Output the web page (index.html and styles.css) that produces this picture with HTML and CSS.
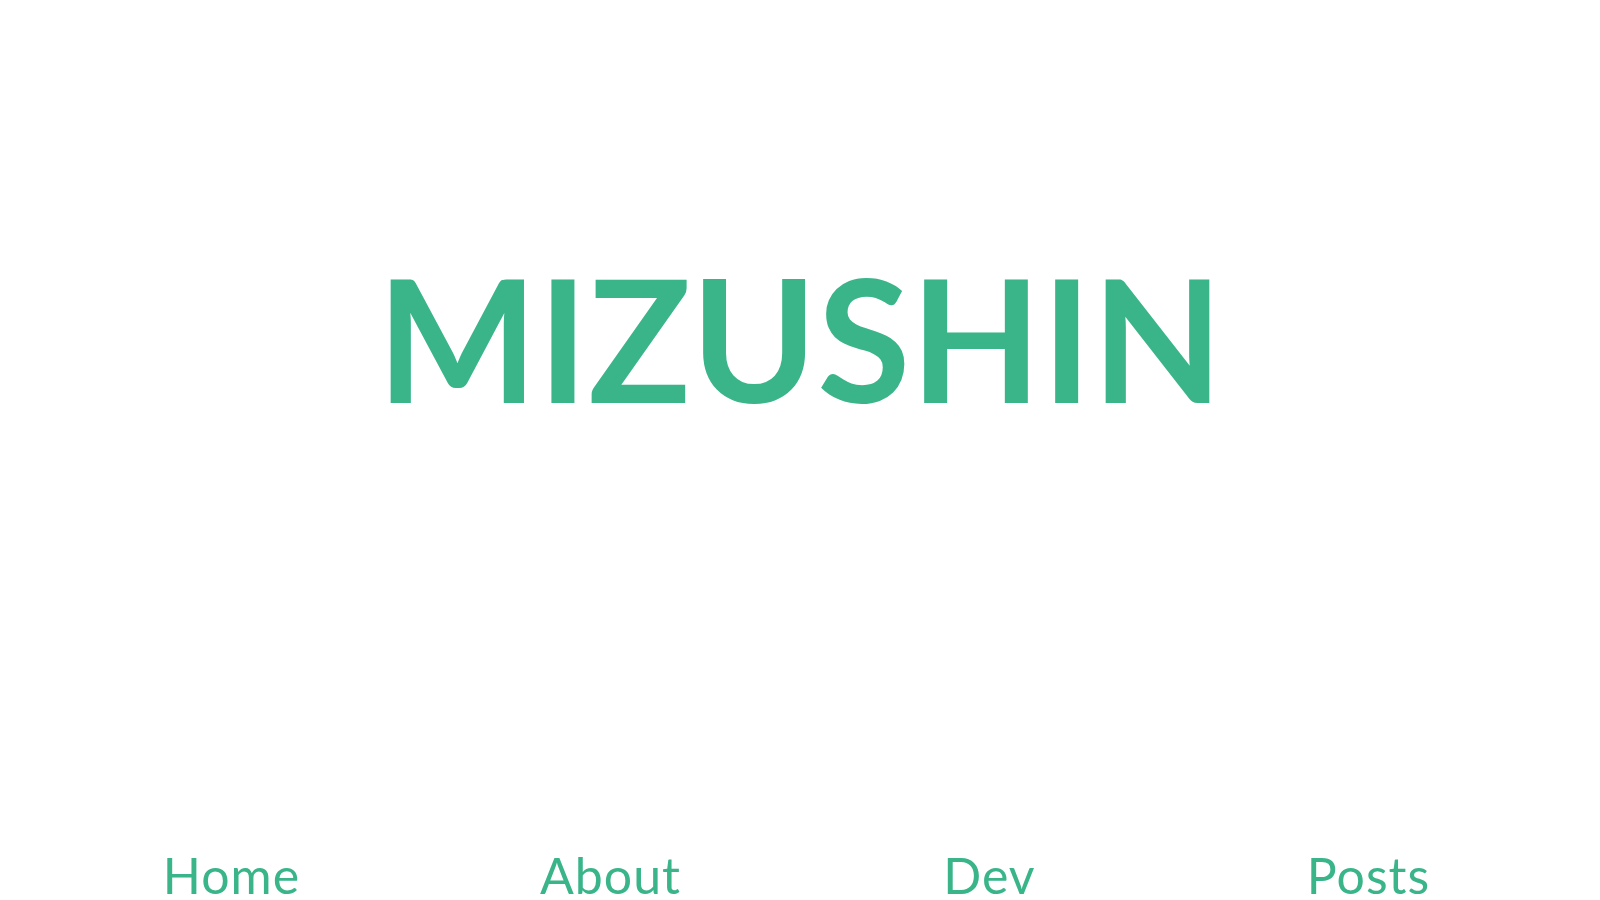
FILE: index.html
```html
<!DOCTYPE html>
<html lang="en">
<head>
<meta charset="utf-8">
<title>MIZUSHIN</title>
<link rel="stylesheet" href="styles.css">
</head>
<body>
<div class="page">
  <header class="hero">
    <h1 class="title">MIZUSHIN</h1>
  </header>
  <nav class="nav">
    <a class="nav-link" href="#">Home</a>
    <a class="nav-link" href="#">About</a>
    <a class="nav-link" href="#">Dev</a>
    <a class="nav-link" href="#">Posts</a>
  </nav>
</div>
</body>
</html>
```

FILE: styles.css
```css
html, body {
  margin: 0;
  padding: 0;
  background: #ffffff;
  overflow: hidden;
}
.page {
  height: 900px;
  display: flex;
  flex-direction: column;
  font-family: Lato, "Noto Sans", sans-serif;
  color: #3ab58a;
}
.hero {
  padding-top: 252px;
  display: flex;
  justify-content: center;
}
.title {
  margin: 0;
  font-size: 170px;
  line-height: 170px;
  font-weight: 700;
  letter-spacing: 0;
  color: #3ab58a;
}
.nav {
  margin-top: 428px;
  display: grid;
  grid-template-columns: repeat(4, 1fr);
  padding: 0 42px;
}
.nav-link {
  text-align: center;
  font-size: 50px;
  line-height: 50px;
  font-weight: 400;
  letter-spacing: 1px;
  color: #3ab58a;
  text-decoration: none;
}
```
